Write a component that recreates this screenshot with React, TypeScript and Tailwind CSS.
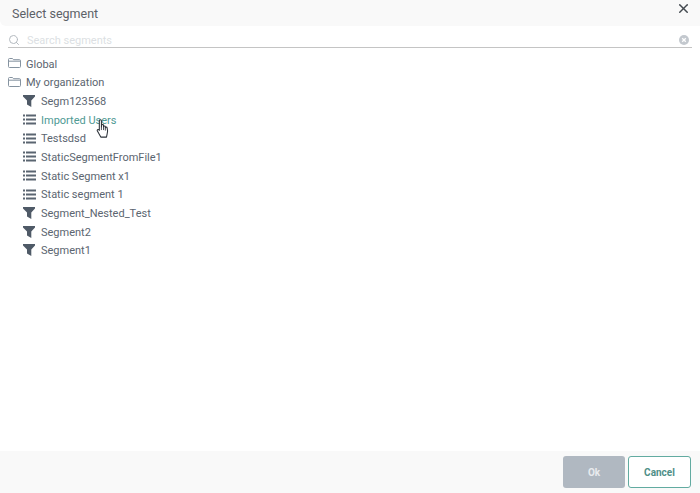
import { X, Search } from "lucide-react";

type Kind = "filter" | "list";

const segments: { name: string; kind: Kind; hover?: boolean }[] = [
  { name: "Segm123568", kind: "filter" },
  { name: "Imported Users", kind: "list", hover: true },
  { name: "Testsdsd", kind: "list" },
  { name: "StaticSegmentFromFile1", kind: "list" },
  { name: "Static Segment x1", kind: "list" },
  { name: "Static segment 1", kind: "list" },
  { name: "Segment_Nested_Test", kind: "filter" },
  { name: "Segment2", kind: "filter" },
  { name: "Segment1", kind: "filter" },
];

function FolderIcon() {
  return (
    <svg width="13" height="10" viewBox="0 0 13 10" fill="none" stroke="#8593a0" strokeWidth="1">
      <path d="M0.500 8.500V1.500a1 1 0 0 1 1-1h3l1 1.200h6a1 1 0 0 1 1 1v5.800a1 1 0 0 1-1 1h-10a1 1 0 0 1-1-1z" />
      <path d="M0.500 3.200h12" />
    </svg>
  );
}

function FilterIcon() {
  return (
    <svg width="12" height="12" viewBox="0 0 12 12" fill="#4f5a67">
      <path d="M0 0h12v1.500L8.300 5.500V12L4 9.500v-4L0 1.500z" />
    </svg>
  );
}

function ListIcon() {
  return (
    <svg width="13" height="11" viewBox="0 0 13 11" fill="#5a6571">
      <rect x="0" y="0.500" width="2" height="2" />
      <rect x="3" y="0.500" width="10" height="2" />
      <rect x="0" y="4.500" width="2" height="2" />
      <rect x="3" y="4.500" width="10" height="2" />
      <rect x="0" y="8.500" width="2" height="2" />
      <rect x="3" y="8.500" width="10" height="2" />
    </svg>
  );
}

function ClearIcon() {
  return (
    <svg width="10" height="10" viewBox="0 0 10 10">
      <circle cx="5" cy="5" r="5" fill="#c3c8ce" />
      <path d="M3.200 3.200l3.600 3.600M6.800 3.200l-3.600 3.600" stroke="#fff" strokeWidth="1.300" />
    </svg>
  );
}

// Pointer drawn over the hovered row
function HandCursor() {
  return (
    <svg className="absolute left-[96px] top-[119px]" width="14" height="20" viewBox="0 0 13 19">
      <path
        d="M3 1.600c0-1.300 2-1.300 2 0v6l.2-1.600c0-1.100 1.800-1.100 1.800 0v1.400c0-1 1.700-1 1.700 0v1c0-.9 1.700-.9 1.700 0 .6 1.800.6 4.200 0 6l-.6 2.800H4.400L1.200 11.500c-.7-1 .5-2.200 1.300-1.300l.5.6z"
        fill="#fff"
        stroke="#2b3138"
        strokeWidth="1"
        strokeLinejoin="round"
      />
      <path d="M5 7.500v3M7 7.500v3M8.700 8.500v2.500" stroke="#2b3138" strokeWidth="0.800" fill="none" />
    </svg>
  );
}

export default function App() {
  return (
    <div
      className="relative flex h-[493px] w-[700px] flex-col overflow-hidden bg-white text-[#5b6570]"
      style={{ fontFamily: "Roboto, sans-serif" }}
    >
      {/* Header */}
      <div className="flex h-[26px] shrink-0 items-start justify-between rounded-bl-md bg-[#f9f9f9] pl-3 pr-[9px]">
        <span className="pt-[8px] text-[12.500px] leading-none text-[#5c6167]">Select segment</span>
        <X size={15} strokeWidth={2.400} className="mt-[1px] text-[#444a50]" />
      </div>

      {/* Search */}
      <div className="ml-[8px] mt-[6px] flex h-[16px] w-[684px] items-center border-b border-[#c4c4c4]">
        <Search size={12} className="text-[#b4bac0]" />
        <span className="ml-[7px] flex-1 translate-y-[2px] text-[11px] text-[#dcdfe3]">Search segments</span>
        <ClearIcon />
        <span className="w-[3px]" />
      </div>

      {/* Tree */}
      <div className="mt-[7.500px] flex-1 pl-[8px] text-[11px]">
        {["Global", "My organization"].map((name) => (
          <div key={name} className="flex h-[18.700px] items-center gap-[5px]">
            <span className="pb-[3px]">
              <FolderIcon />
            </span>
            <span>{name}</span>
          </div>
        ))}
        {segments.map((s) => (
          <div key={s.name} className="flex h-[18.700px] items-center pl-[15px]">
            <span className="flex w-[18px] shrink-0 pb-[3px]">
              {s.kind === "filter" ? <FilterIcon /> : <ListIcon />}
            </span>
            <span className={s.hover ? "text-[#4f9a94]" : ""}>{s.name}</span>
          </div>
        ))}
      </div>

      {/* Footer */}
      <div className="flex h-[42px] shrink-0 items-start justify-end gap-[3px] bg-[#f9f9f9] pr-[9px] pt-[5px]">
        <button className="h-[32px] w-[62px] rounded-[3px] bg-[#b0b8c1] text-[10px] font-bold text-[#e8ebee]">
          Ok
        </button>
        <button className="h-[32px] w-[63px] rounded-[3px] border border-[#62aba1] bg-white text-[10px] font-bold text-[#4f8f88]">
          Cancel
        </button>
      </div>

      <HandCursor />
    </div>
  );
}
